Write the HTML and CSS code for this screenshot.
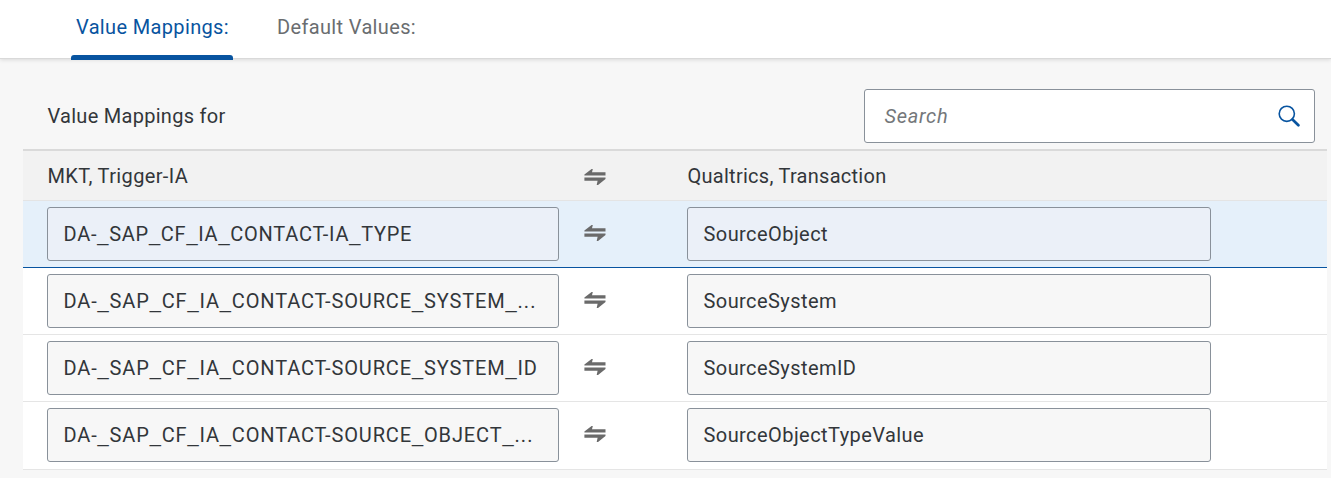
FILE: index.html
```html
<!DOCTYPE html>
<html lang="en">
<head>
<meta charset="utf-8">
<title>Value Mappings</title>
<link rel="stylesheet" href="styles.css">
</head>
<body>
<svg class="defs" width="0" height="0" aria-hidden="true">
  <symbol id="swap" viewBox="0 0 22 18">
    <path d="M0.4 7.6V6.4L7.6 0.9H8.8L8 4.3H21.5V7.6Z"/>
    <path d="M0.4 9.5H21.5V10.9L14 16.9H12.7L13.6 12.7H0.4Z"/>
  </symbol>
</svg>
<nav class="tabs">
  <a class="tab active"><span>Value Mappings:</span></a>
  <a class="tab"><span>Default Values:</span></a>
</nav>
<main class="panel">
  <div class="toolbar">
    <h1 class="title">Value Mappings for</h1>
    <div class="search">
      <span class="placeholder">Search</span>
      <svg class="lens" viewBox="0 0 22 22"><circle cx="8.8" cy="8.8" r="7.6"/><path d="M14.5 14.5 20.4 20.2"/></svg>
    </div>
  </div>
  <div class="table">
    <div class="row head">
      <span class="cell">MKT, Trigger-IA</span>
      <svg class="swap"><use href="#swap"/></svg>
      <span class="cell target">Qualtrics, Transaction</span>
    </div>
    <div class="row selected">
      <div class="field code short">DA-<i>_</i>SAP<i>_</i>CF<i>_</i>IA<i>_</i>CONTACT-IA<i>_</i>TYPE</div>
      <svg class="swap"><use href="#swap"/></svg>
      <div class="field">SourceObject</div>
    </div>
    <div class="row">
      <div class="field code">DA-<i>_</i>SAP<i>_</i>CF<i>_</i>IA<i>_</i>CONTACT-SOURCE<i>_</i>SYSTEM<i>_</i><b>...</b></div>
      <svg class="swap"><use href="#swap"/></svg>
      <div class="field">SourceSystem</div>
    </div>
    <div class="row">
      <div class="field code">DA-<i>_</i>SAP<i>_</i>CF<i>_</i>IA<i>_</i>CONTACT-SOURCE<i>_</i>SYSTEM<i>_</i>ID</div>
      <svg class="swap"><use href="#swap"/></svg>
      <div class="field">SourceSystemID</div>
    </div>
    <div class="row last">
      <div class="field code">DA-<i>_</i>SAP<i>_</i>CF<i>_</i>IA<i>_</i>CONTACT-SOURCE<i>_</i>OBJECT<i>_</i><b>...</b></div>
      <svg class="swap"><use href="#swap"/></svg>
      <div class="field">SourceObjectTypeValue</div>
    </div>
  </div>
</main>
</body>
</html>
```
FILE: styles.css
```css
* { box-sizing: border-box; }
body {
  margin: 0;
  height: 478px;
  overflow: hidden;
  background: #f7f7f7;
  color: #32363a;
  font: 20px/24px Roboto, "Liberation Sans", sans-serif;
  white-space: nowrap;
}
.defs { display: block; height: 0; }
.tabs {
  display: flex;
  gap: 39px;
  height: 59px;
  padding-left: 71px;
  background: #fff;
  border-bottom: 1px solid #d9d9d9;
  box-shadow: 0 1px 4px rgba(0, 0, 0, .12);
}
.tab {
  width: 162px;
  height: 60px;
  padding: 15px 5px 0;
  color: #6a6d70;
  letter-spacing: .35px;
}
.tab.active {
  display: flex;
  flex-direction: column;
  justify-content: space-between;
  color: #0854a0;
}
.tab.active::after {
  content: "";
  height: 5px;
  margin: 0 -5px;
  border-radius: 3px 3px 0 0;
  background: #0854a0;
}
.toolbar {
  display: flex;
  justify-content: space-between;
  height: 90px;
  padding: 30px 16px 0 47.5px;
}
.title { margin: 0; padding-top: 15px; font: inherit; letter-spacing: .28px; }
.search {
  display: flex;
  align-items: center;
  justify-content: space-between;
  width: 451px;
  height: 54px;
  padding: 0 14px 0 19.5px;
  background: #fff;
  border: 1px solid #89919a;
  border-radius: 3px;
}
.placeholder { color: #74777a; font-style: italic; letter-spacing: .7px; }
.lens { width: 22px; height: 22px; fill: none; stroke: #0854a0; stroke-width: 1.6; }
.lens path { stroke-width: 2.7; stroke-linecap: round; }
.table { margin: 0 4px 0 23px; }
.row {
  display: grid;
  grid-template-columns: 512px 22px 524px;
  column-gap: 25px;
  align-items: start;
  height: 67px;
  padding: 6px 0 0 24px;
  background: #fff;
  border-bottom: 1px solid #e5e5e5;
}
.row > :last-child { margin-left: 56px; width: 524px; }
.head {
  height: 52px;
  padding-top: 13px;
  background: #f2f2f2;
  border-top: 2px solid #dadada;
  border-bottom-color: #e4e4e4;
}
.head .cell { padding-left: .5px; letter-spacing: .36px; }
.head .target { letter-spacing: .27px; }
.selected { background: #e5f0fa; border-bottom-color: #0854a0; }
.last { height: 68px; }
.field {
  height: 54px;
  padding: 14px 15.5px 0;
  background: #f7f7f7;
  border: 1px solid #89919a;
  border-radius: 3px;
  letter-spacing: .43px;
}
.code { letter-spacing: .86px; }
.code.short { letter-spacing: .75px; }
.code i { font-family: "Liberation Sans", sans-serif; font-style: normal; }
.code b { font-weight: 400; letter-spacing: 1.1px; }
.selected .field { background: #ebf0f8; }
.swap { width: 22px; height: 18px; margin-top: 17px; fill: #6a6a6a; }
.head .swap { margin-top: 4px; }
```
